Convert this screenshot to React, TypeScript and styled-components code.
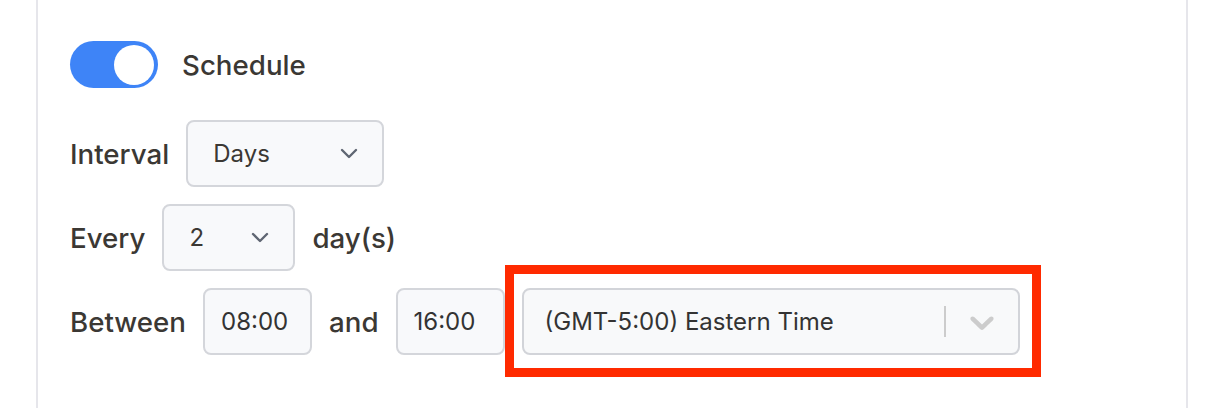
import React from "react";
import styled, { createGlobalStyle } from "styled-components";

const Global = createGlobalStyle`
  html, body { margin: 0; padding: 0; background: #ffffff; }
  body { font-family: Inter, "Noto Sans", Arial, sans-serif; }
  * { box-sizing: border-box; }
`;

const Page = styled.div`
  width: 1226px;
  height: 408px;
  overflow: hidden;
  background: #ffffff;
`;

const Panel = styled.div`
  margin-left: 36px;
  width: 1152px;
  height: 408px;
  border-left: 2px solid #e6e6eb;
  border-right: 2px solid #e6e6eb;
  padding: 41px 0 0 32px;
  display: flex;
  flex-direction: column;
`;

const ToggleRow = styled.div`
  display: flex;
  align-items: center;
  gap: 24px;
  height: 47px;
  margin-bottom: 32px;
`;

const Switch = styled.button<{ $on: boolean }>`
  position: relative;
  width: 88px;
  height: 47px;
  border: none;
  padding: 0;
  border-radius: 24px;
  background: ${(p) => (p.$on ? "#3e84f7" : "#d1d5db")};
  cursor: pointer;
  flex-shrink: 0;
`;

const Knob = styled.span<{ $on: boolean }>`
  position: absolute;
  top: 3.5px;
  left: ${(p) => (p.$on ? "44px" : "3px")};
  width: 40px;
  height: 40px;
  border-radius: 50%;
  background: #ffffff;
`;

const Rows = styled.div`
  display: flex;
  flex-direction: column;
  gap: 17px;
`;

const Row = styled.div`
  display: flex;
  align-items: center;
  gap: 17px;
  height: 67px;
`;

const Label = styled.span`
  font-family: Inter, "Noto Sans", Arial, sans-serif;
  font-size: 27.7px;
  font-weight: 500;
  color: #3b3834;
  white-space: nowrap;
`;

const SelectBox = styled.div<{ $width: number }>`
  width: ${(p) => p.$width}px;
  height: 67px;
  border: 2px solid #d4d6db;
  border-radius: 8px;
  background: #f8f9fb;
  display: flex;
  align-items: center;
  justify-content: space-between;
  padding: 0 24px 0 25px;
  font-size: 24px;
  color: #3b3834;
  flex-shrink: 0;
`;

const TimeInput = styled.div`
  width: 109px;
  height: 67px;
  border: 2px solid #d4d6db;
  border-radius: 8px;
  background: #f8f9fb;
  display: flex;
  align-items: center;
  padding-left: 16px;
  font-size: 24px;
  color: #333333;
  flex-shrink: 0;
`;

const Highlight = styled.div`
  position: relative;
  flex-shrink: 0;
`;

const RedFrame = styled.div`
  position: absolute;
  top: -23px;
  left: -17px;
  right: -21px;
  bottom: -22px;
  border: 9px solid #ff2a00;
  pointer-events: none;
`;

const ZoneControl = styled.div`
  width: 498px;
  height: 67px;
  border: 2px solid #d2d4d9;
  border-radius: 8px;
  background: #f8f9fa;
  display: flex;
  align-items: center;
`;

const ZoneValue = styled.div`
  flex: 1;
  padding-left: 21px;
  font-size: 24px;
  color: #333333;
  white-space: nowrap;
`;

const Separator = styled.span`
  align-self: stretch;
  width: 2px;
  margin: 16px 0;
  background: #cccccc;
`;

const Indicator = styled.div`
  padding: 16px;
  display: flex;
  color: #cccccc;
`;

const SmallChevron = () => (
  <svg width="18" height="11" viewBox="0 0 18 11" fill="none">
    <polyline
      points="2,2 9,9 16,2"
      stroke="#5f6673"
      strokeWidth="2.4"
      strokeLinecap="round"
      strokeLinejoin="round"
    />
  </svg>
);

const ReactSelectChevron = () => (
  <svg width="40" height="40" viewBox="0 0 20 20" fill="currentColor">
    <path d="M4.516 7.548c0.436-0.446 1.043-0.481 1.576 0l3.908 3.747 3.908-3.747c0.533-0.481 1.141-0.446 1.574 0 0.436 0.445 0.408 1.197 0 1.615-0.406 0.418-4.695 4.502-4.695 4.502-0.217 0.223-0.502 0.335-0.787 0.335s-0.57-0.112-0.789-0.335c0 0-4.287-4.084-4.695-4.502s-0.436-1.17 0-1.615z" />
  </svg>
);

export default function App() {
  return (
    <Page>
      <Global />
      <Panel>
        <ToggleRow>
          <Switch $on={true} aria-label="Schedule">
            <Knob $on={true} />
          </Switch>
          <Label>Schedule</Label>
        </ToggleRow>
        <Rows>
          <Row>
            <Label>Interval</Label>
            <SelectBox $width={198}>
              <span>Days</span>
              <SmallChevron />
            </SelectBox>
          </Row>
          <Row>
            <Label>Every</Label>
            <SelectBox $width={133}>
              <span>2</span>
              <SmallChevron />
            </SelectBox>
            <Label>day(s)</Label>
          </Row>
          <Row>
            <Label>Between</Label>
            <TimeInput>08:00</TimeInput>
            <Label>and</Label>
            <TimeInput>16:00</TimeInput>
            <Highlight>
              <ZoneControl>
                <ZoneValue>(GMT-5:00) Eastern Time</ZoneValue>
                <Separator />
                <Indicator>
                  <ReactSelectChevron />
                </Indicator>
              </ZoneControl>
              <RedFrame />
            </Highlight>
          </Row>
        </Rows>
      </Panel>
    </Page>
  );
}
